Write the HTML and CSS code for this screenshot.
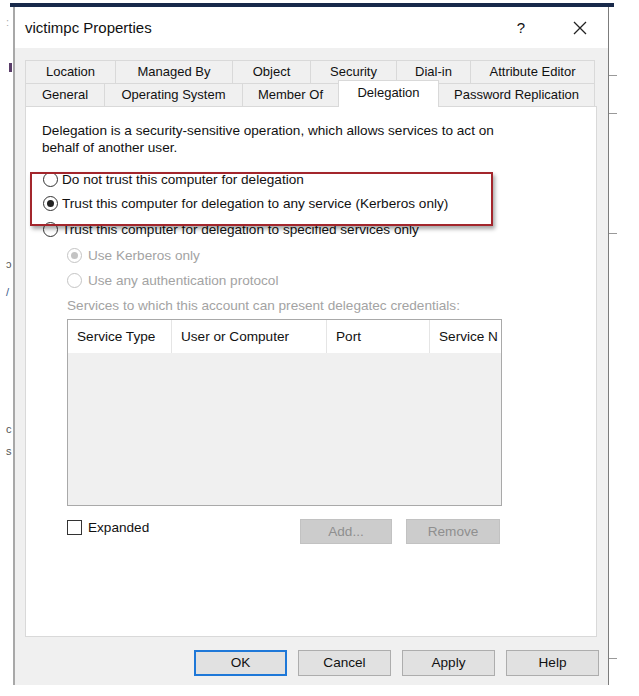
FILE: index.html
```html
<!DOCTYPE html>
<html>
<head>
	<meta charset="utf-8">
	<meta name="viewport" content="width=device-width, initial-scale=1">
	<title>victimpc Properties</title>
	<link rel="stylesheet" href="styles.css">
</head>
<body>
	<div class="desk">
		<!-- bits of the window behind the dialog -->
		<span class="bit bit1">:</span>
		<span class="bit bit2"></span>
		<span class="bit bit3">ɔ</span>
		<span class="bit bit4">/</span>
		<span class="bit bit5">c</span>
		<span class="bit bit6">s</span>
		<span class="tick tick1"></span>
		<span class="tick tick2"></span>
		<span class="tick tick3"></span>
		<span class="tick tick4"></span>

		<div class="frame">
			<div class="topline"></div>
			<div class="window">
				<div class="titlebar">
					<span class="title">victimpc Properties</span>
					<span class="qmark">?</span>
					<span class="close">
						<svg width="14" height="14" viewBox="0 0 14 14"><path d="M1 1L13 13M13 1L1 13" stroke="#222" stroke-width="1.3" fill="none"/></svg>
					</span>
				</div>

				<div class="client">
					<div class="tabs">
						<div class="tabrow">
							<div class="tab w90">Location</div>
							<div class="tab w117">Managed By</div>
							<div class="tab w78">Object</div>
							<div class="tab w86">Security</div>
							<div class="tab w74">Dial-in</div>
							<div class="tab w125">Attribute Editor</div>
						</div>
						<div class="tabrow">
							<div class="tab w79">General</div>
							<div class="tab w138">Operating System</div>
							<div class="tab w96">Member Of</div>
							<div class="tab w100 active">Delegation</div>
							<div class="tab w157">Password Replication</div>
						</div>
					</div>

					<div class="panel">
						<p class="intro">Delegation is a security-sensitive operation, which allows services to act on<br>behalf of another user.</p>

						<label class="opt r1"><span class="radio"></span>Do not trust this computer for delegation</label>
						<label class="opt r2"><span class="radio on"></span>Trust this computer for delegation to any service (Kerberos only)</label>
						<label class="opt r3"><span class="radio"></span>Trust this computer for delegation to specified services only</label>
						<label class="opt sub r4 off"><span class="radio on"></span>Use Kerberos only</label>
						<label class="opt sub r5 off"><span class="radio"></span>Use any authentication protocol</label>

						<div class="svclabel">Services to which this account can present delegatec credentials:</div>
						<div class="listview">
							<div class="lvhead">
								<div class="col c1">Service Type</div>
								<div class="col c2">User or Computer</div>
								<div class="col c3">Port</div>
								<div class="col c4">Service N</div>
							</div>
							<div class="lvbody"></div>
						</div>

						<div class="listfoot">
							<label class="check"><span class="box"></span>Expanded</label>
							<div class="btn dim add">Add...</div>
							<div class="btn dim remove">Remove</div>
						</div>

						<div class="mark"></div>
					</div>

					<div class="buttons">
						<div class="btn big default">OK</div>
						<div class="btn big">Cancel</div>
						<div class="btn big">Apply</div>
						<div class="btn big">Help</div>
					</div>
				</div>
			</div>
		</div>
	</div>
</body>
</html>
```

FILE: styles.css
```css
body {
	margin: 0;
	background: #fff;
	font-family: "Liberation Sans", Arial, sans-serif;
	font-size: 13.6px;
	color: #111;
}

.desk {
	position: relative;
	width: 639px;
	height: 696px;
	overflow: hidden;
}

.bit {
	position: absolute;
	left: 6px;
	font-size: 11px;
	color: #555;
}
.bit1 { top: 16px; color: #aaa; }
.bit2 { top: 63px; left: 9px; width: 3px; height: 9px; background: #5a3d6a; }
.bit3 { top: 258px; }
.bit4 { top: 286px; color: #3a5a8a; }
.bit5 { top: 423px; }
.bit6 { top: 445px; }

.tick {
	position: absolute;
	left: 609px;
	width: 8px;
	height: 1px;
	background: #999;
}
.tick1 { top: 75px; }
.tick2 { top: 113px; }
.tick3 { top: 233px; }
.tick4 { top: 658px; }

.frame {
	padding-top: 3px;
	margin-left: 10px;
}

.topline {
	width: 604px;
	height: 4px;
	background: #18294a;
}

.window {
	margin-left: 3px;
	width: 593px;
	height: 678px;
	border-left: 2px solid #a8a8a8;
	border-right: 1px solid #7c7c7c;
	background: #f0f0f0;
	display: flex;
	flex-direction: column;
}

.titlebar {
	height: 41px;
	background: #fff;
	display: flex;
	align-items: center;
	padding-left: 10px;
}
.title {
	font-size: 15px;
	color: #111;
	flex: 1;
}
.qmark {
	font-size: 15px;
	width: 20px;
	margin-right: 39px;
	text-align: center;
}
.close {
	width: 20px;
	margin-right: 18px;
	display: flex;
	justify-content: center;
}

.client {
	flex: 1;
	padding: 12px 0 0 10px;
	display: flex;
	flex-direction: column;
}

.tabs {
	width: 570px;
}
.tabrow {
	display: flex;
	height: 23px;
}
.tab {
	box-sizing: border-box;
	border: 1px solid #d9d9d9;
	border-bottom: none;
	margin-right: -1px;
	background: #f0f0f0;
	text-align: center;
	line-height: 22px;
	font-size: 13px;
}
.tab.active {
	background: #fff;
	height: 27px;
	margin-top: -3px;
	position: relative;
	z-index: 2;
	line-height: 23px;
}
.w74 { width: 75px; }
.w78 { width: 79px; }
.w79 { width: 80px; }
.w86 { width: 87px; }
.w90 { width: 91px; }
.w96 { width: 97px; }
.w100 { width: 101px; }
.w117 { width: 118px; }
.w125 { width: 125px; }
.w138 { width: 139px; }
.w157 { width: 157px; }

.panel {
	position: relative;
	box-sizing: border-box;
	width: 572px;
	height: 531px;
	background: #fff;
	border: 1px solid #d9d9d9;
	padding: 0 0 0 17px;
}

.intro {
	margin: 15px 0 0 -1px;
	line-height: 17px;
}

.opt {
	display: flex;
	align-items: center;
	height: 20px;
	white-space: nowrap;
}
.r1 { margin-top: 13px; }
.r2 { margin-top: 4px; }
.r3 { margin-top: 6px; }
.r4 { margin-top: 6px; }
.r5 { margin-top: 5px; }
.sub { padding-left: 24px; }
.off { color: #a3a3a3; }

.radio {
	box-sizing: border-box;
	width: 15px;
	height: 15px;
	border: 1px solid #333;
	border-radius: 50%;
	margin-right: 4px;
	display: flex;
	align-items: center;
	justify-content: center;
	background: #fff;
}
.sub .radio { margin-right: 6px; border-color: #c4c4c4; }
.radio.on::after {
	content: "";
	width: 7px;
	height: 7px;
	border-radius: 50%;
	background: #222;
}
.sub .radio.on::after { background: #c4c4c4; }

.svclabel {
	margin: 7px 0 0 24px;
	height: 18px;
	line-height: 18px;
	color: #a3a3a3;
}

.listview {
	box-sizing: border-box;
	margin: 4px 0 0 24px;
	width: 435px;
	height: 187px;
	border: 1px solid #a9a9a9;
	background: #f0f0f0;
	display: flex;
	flex-direction: column;
	overflow: hidden;
}
.lvhead {
	display: flex;
	height: 33px;
	background: #fff;
}
.col {
	box-sizing: border-box;
	border-right: 1px solid #e5e5e5;
	padding-left: 9px;
	line-height: 33px;
	white-space: nowrap;
	overflow: hidden;
}
.c1 { width: 104px; }
.c2 { width: 155px; }
.c3 { width: 103px; }
.c4 { flex: 1; border-right: none; }

.listfoot {
	display: flex;
	margin: 13px 0 0 24px;
	width: 433px;
	align-items: flex-start;
}
.check {
	display: flex;
	align-items: center;
	height: 16px;
	flex: 1;
}
.box {
	box-sizing: border-box;
	width: 15px;
	height: 15px;
	border: 1px solid #333;
	margin-right: 6px;
	background: #fff;
}

.btn {
	box-sizing: border-box;
	height: 25px;
	line-height: 23px;
	text-align: center;
	border: 1px solid #adadad;
	background: #e1e1e1;
}
.btn.dim {
	background: #cccccc;
	border-color: #c2c2c2;
	color: #8f8f8f;
}
.add { width: 92px; }
.remove { width: 94px; margin-left: 14px; }

.mark {
	position: absolute;
	left: 4px;
	top: 65px;
	width: 463px;
	height: 54px;
	box-sizing: border-box;
	border: 2px solid #a3262c;
	box-shadow: 2px 3px 4px rgba(0, 0, 0, 0.35);
}

.buttons {
	display: flex;
	justify-content: flex-end;
	gap: 11px;
	margin: 13px 9px 0 0;
}
.btn.big {
	width: 93px;
	height: 26px;
	line-height: 24px;
}
.btn.default {
	border: 2px solid #1e78d8;
	line-height: 22px;
}
```
